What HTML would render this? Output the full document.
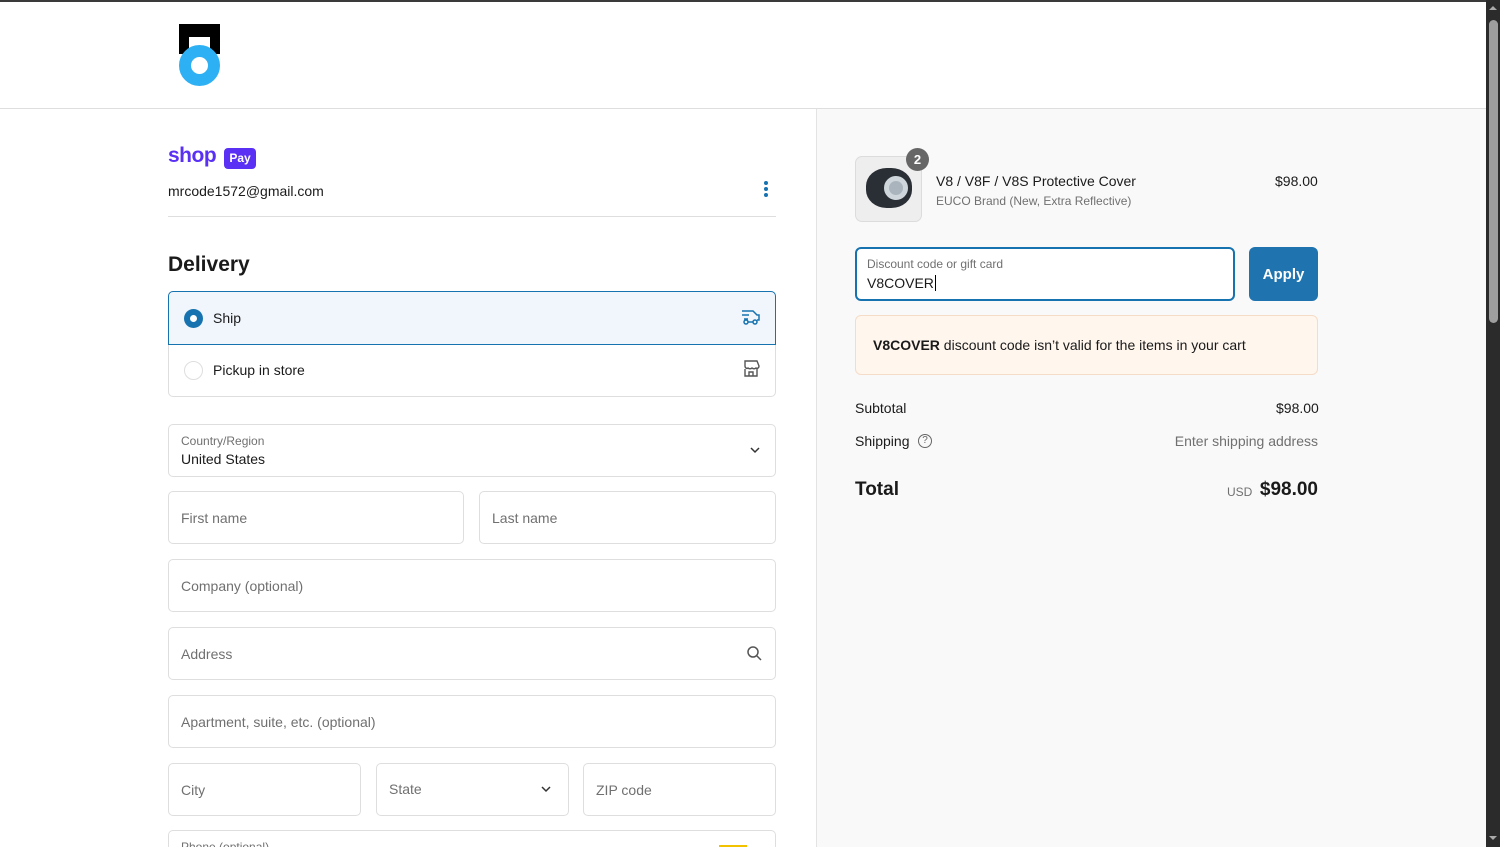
<!DOCTYPE html>
<html style="width:1500px;height:847px;overflow:hidden"><head><meta charset="utf-8"><style>
*{box-sizing:border-box;margin:0;padding:0}
body{width:1500px;height:847px;overflow:hidden;background:#fff;font-family:"Liberation Sans",sans-serif;color:#1a1a1a;position:relative}
.a{position:absolute}
.f{position:absolute;border:1px solid #dedede;border-radius:5px;background:#fff;height:53px}
.ph{position:absolute;left:12px;top:18px;font-size:14px;color:#707070}
.t{font-size:14px}
</style></head><body>
<div class="a" style="left:0;top:0;width:1500px;height:2px;background:#3a3a3a"></div>
<div class="a" style="left:179px;top:24px;width:41px;height:30px;background:#000"></div>
<div class="a" style="left:189px;top:37px;width:21px;height:17px;background:#fff"></div>
<div class="a" style="left:179px;top:45px;width:41px;height:41px;border-radius:50%;border:12px solid #2eb0f4;background:#fff"></div>
<div class="a" style="left:0;top:108px;width:1486px;height:1px;background:#dedede"></div>
<div class="a" style="left:816px;top:109px;width:670px;height:738px;background:#f9f9f9;border-left:1px solid #e3e3e3"></div>
<div class="a" style="left:1486px;top:0;width:14px;height:847px;background:#2b2b2b"></div>
<div class="a" style="left:1489px;top:20px;width:9px;height:303px;background:#9e9e9e;border-radius:5px"></div>
<div class="a" style="left:1489px;top:6px;width:0;height:0;border-left:4px solid transparent;border-right:4px solid transparent;border-bottom:4px solid #aaa"></div>
<div class="a" style="left:1489px;top:836px;width:0;height:0;border-left:4px solid transparent;border-right:4px solid transparent;border-top:4px solid #aaa"></div>

<div class="a" style="left:168px;top:144px;font-size:21px;font-weight:bold;color:#5a31f4;letter-spacing:-0.5px">shop</div>
<div class="a" style="left:224px;top:148px;width:32px;height:21px;background:#5a31f4;border-radius:4px;color:#fff;font-size:12px;font-weight:bold;text-align:center;line-height:21px">Pay</div>
<div class="a t" style="left:168px;top:183px">mrcode1572@gmail.com</div>
<div class="a" style="left:764px;top:181px;width:4px;height:4px;border-radius:50%;background:#1773b0;box-shadow:0 6px 0 #1773b0,0 12px 0 #1773b0"></div>
<div class="a" style="left:168px;top:216px;width:608px;height:1px;background:#dedede"></div>
<div class="a" style="left:168px;top:253px;font-size:21px;font-weight:bold">Delivery</div>

<div class="a" style="left:168px;top:291px;width:608px;height:106px;border:1px solid #dedede;border-radius:5px"></div>
<div class="a" style="left:168px;top:291px;width:608px;height:54px;border:1px solid #1773b0;border-radius:5px 5px 0 0;background:#f0f6fc"></div>
<div class="a" style="left:184px;top:309px;width:19px;height:19px;border-radius:50%;background:#1773b0"></div>
<div class="a" style="left:190px;top:315px;width:7px;height:7px;border-radius:50%;background:#fff"></div>
<div class="a t" style="left:213px;top:310px">Ship</div>
<svg class="a" style="left:741px;top:308px" width="20" height="18" viewBox="0 0 20 18" fill="none" stroke="#1773b0" stroke-width="1.5"><path d="M1 3h11l4 4h2v5h-2M1 7h7M3 11h4"/><circle cx="5" cy="14" r="2"/><circle cx="14" cy="14" r="2"/><path d="M7 14h5"/></svg>
<div class="a" style="left:184px;top:361px;width:19px;height:19px;border-radius:50%;border:1px solid #dedede"></div>
<div class="a t" style="left:213px;top:362px">Pickup in store</div>
<svg class="a" style="left:741px;top:359px" width="20" height="19" viewBox="0 0 20 19" fill="none" stroke="#555" stroke-width="1.4"><path d="M4 2h12l2 5c0 2-2 3-3 2-1 1-3 1-4 0-1 1-3 1-4 0-1 1-3 0-3-2zM4 10v7h12v-7M8 17v-4h4v4"/></svg>

<div class="f" style="left:168px;top:424px;width:608px"><div class="a" style="left:12px;top:9px;font-size:12px;color:#707070">Country/Region</div><div class="a t" style="left:12px;top:26px">United States</div>
<svg class="a" style="left:580px;top:20px" width="12" height="10" viewBox="0 0 12 10" fill="none" stroke="#333" stroke-width="1.5"><path d="M2 3l4 4 4-4"/></svg></div>
<div class="f" style="left:168px;top:491px;width:296px"><div class="ph">First name</div></div>
<div class="f" style="left:479px;top:491px;width:297px"><div class="ph">Last name</div></div>
<div class="f" style="left:168px;top:559px;width:608px"><div class="ph">Company (optional)</div></div>
<div class="f" style="left:168px;top:627px;width:608px"><div class="ph">Address</div>
<svg class="a" style="left:577px;top:17px" width="16" height="16" viewBox="0 0 16 16" fill="none" stroke="#555" stroke-width="1.5"><circle cx="7" cy="7" r="5"/><path d="M11 11l4 4"/></svg></div>
<div class="f" style="left:168px;top:695px;width:608px"><div class="ph">Apartment, suite, etc. (optional)</div></div>
<div class="f" style="left:168px;top:763px;width:193px"><div class="ph">City</div></div>
<div class="f" style="left:376px;top:763px;width:193px"><div class="ph" style="top:17px">State</div>
<svg class="a" style="left:163px;top:20px" width="12" height="10" viewBox="0 0 12 10" fill="none" stroke="#333" stroke-width="1.5"><path d="M2 3l4 4 4-4"/></svg></div>
<div class="f" style="left:583px;top:763px;width:193px"><div class="ph">ZIP code</div></div>
<div class="a" style="left:168px;top:830px;width:608px;height:17px;border:1px solid #dedede;border-bottom:none;border-radius:5px 5px 0 0;background:#fff;overflow:hidden"><div class="a" style="left:12px;top:9px;font-size:12px;color:#707070">Phone (optional)</div><div class="a" style="left:550px;top:14px;width:28px;height:4px;background:#f2c200"></div></div>

<div class="a" style="left:855px;top:156px;width:67px;height:66px;border:1px solid #dcdcdc;border-radius:7px;background:#eee"></div>
<div class="a" style="left:866px;top:168px;width:46px;height:40px;border-radius:45%;background:#2a2f36"></div>
<div class="a" style="left:884px;top:176px;width:24px;height:24px;border-radius:50%;background:#aab4bc;border:5px solid #cfd6dc"></div>
<div class="a" style="left:906px;top:148px;width:23px;height:23px;border-radius:50%;background:#666;color:#fff;font-size:13px;font-weight:bold;text-align:center;line-height:23px">2</div>
<div class="a t" style="left:936px;top:173px">V8 / V8F / V8S Protective Cover</div>
<div class="a" style="left:936px;top:194px;font-size:12px;color:#707070">EUCO Brand (New, Extra Reflective)</div>
<div class="a t" style="left:1275px;top:173px">$98.00</div>

<div class="a" style="left:855px;top:247px;width:380px;height:54px;border:2px solid #1773b0;border-radius:6px;background:#fff"></div>
<div class="a" style="left:867px;top:257px;font-size:12px;color:#707070">Discount code or gift card</div>
<div class="a t" style="left:867px;top:275px">V8COVER<span style="border-left:1px solid #000;margin-left:1px"></span></div>
<div class="a" style="left:1249px;top:247px;width:69px;height:54px;border-radius:6px;background:#1f74b0;color:#fff;font-size:15px;font-weight:bold;text-align:center;line-height:56px">Apply</div>
<div class="a" style="left:855px;top:315px;width:463px;height:60px;border:1px solid #f5dcc8;border-radius:6px;background:#fff6ee"></div>
<div class="a t" style="left:873px;top:337px"><b>V8COVER</b> discount code isn’t valid for the items in your cart</div>

<div class="a t" style="left:855px;top:400px">Subtotal</div>
<div class="a t" style="left:1276px;top:400px">$98.00</div>
<div class="a t" style="left:855px;top:433px">Shipping</div>
<div class="a" style="left:918px;top:434px;width:14px;height:14px;border-radius:50%;border:1.3px solid #666;font-size:10px;text-align:center;line-height:12px;color:#666">?</div>
<div class="a t" style="left:1318px;top:433px;color:#707070;transform:translateX(-100%);white-space:nowrap">Enter shipping address</div>
<div class="a" style="left:855px;top:479px;font-size:19px;font-weight:bold">Total</div>
<div class="a" style="left:1227px;top:485px;font-size:12px;color:#707070">USD</div>
<div class="a" style="left:1318px;top:479px;font-size:19px;font-weight:bold;transform:translateX(-100%)">$98.00</div>
</body></html>
